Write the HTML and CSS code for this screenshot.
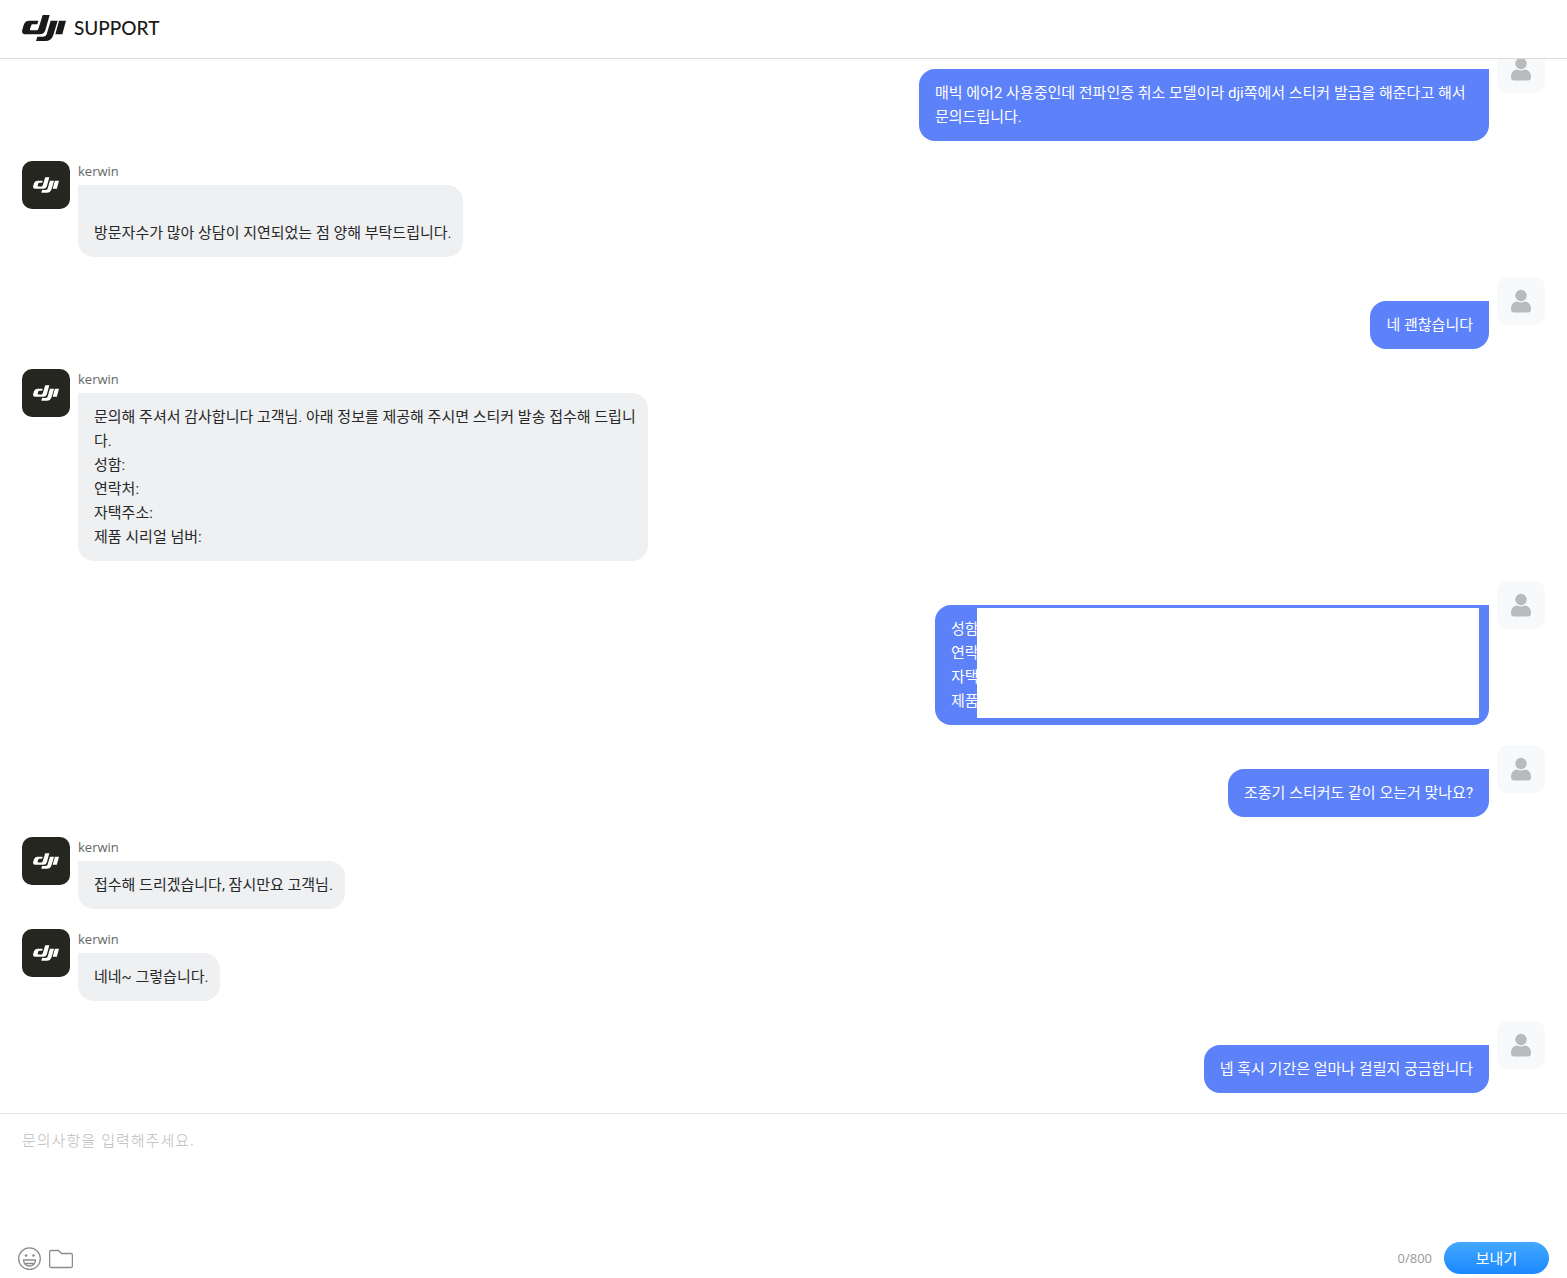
FILE: index.html
```html
<!DOCTYPE html>
<html lang="ko">
<head>
<meta charset="utf-8">
<meta name="viewport" content="width=device-width, initial-scale=1">
<title>DJI Support</title>
<link rel="stylesheet" href="styles.css">
</head>
<body>
<svg class="sprite" aria-hidden="true">
  <symbol id="dji" viewBox="0 0 132 78">
    <path d="M62 0H83L70 46Q66 58 54 58H11Q-3 58 1 44L5 30Q9 17 22 17H49L46 28H33Q28 28 27 32L24 42Q23 46 27 46H44Q48 46 49 42ZM86 17H107L94 60Q88 78 70 78H42L46 65H62Q72 65 74 58ZM111 17H132L121 58H100Z"/>
  </symbol>
  <symbol id="person" viewBox="0 0 20 24">
    <circle cx="10" cy="6.500" r="5.700"/>
    <path d="M6 12.500Q10 14.500 14 12.500C18 13 20 16 20 20Q20 23.500 17 23.500H3Q0 23.500 0 20C0 16 2 13 6 12.500Z"/>
  </symbol>
</svg>
<div class="page">
  <header class="header">
    <a class="brand" href="#" aria-label="DJI Support"><svg class="brand-logo"><use href="#dji"/></svg><span>SUPPORT</span></a>
  </header>
  <main class="chat">
    <div class="messages">
      <article class="message mine">
        <div class="avatar"><svg><use href="#person"/></svg></div>
        <div class="body"><p class="bubble">매빅 에어2 사용중인데 전파인증 취소 모델이라 dji쪽에서 스티커 발급을 해준다고 해서 문의드립니다.</p></div>
      </article>
      <article class="message">
        <div class="avatar"><svg><use href="#dji"/></svg></div>
        <div class="body"><span class="name">kerwin</span><p class="bubble"><br>방문자수가 많아 상담이 지연되었는 점 양해 부탁드립니다.</p></div>
      </article>
      <article class="message mine">
        <div class="avatar"><svg><use href="#person"/></svg></div>
        <div class="body"><p class="bubble">네 괜찮습니다</p></div>
      </article>
      <article class="message">
        <div class="avatar"><svg><use href="#dji"/></svg></div>
        <div class="body"><span class="name">kerwin</span><p class="bubble">문의해 주셔서 감사합니다 고객님. 아래 정보를 제공해 주시면 스티커 발송 접수해 드립니다.<br>성함:<br>연락처:<br>자택주소:<br>제품 시리얼 넘버:</p></div>
      </article>
      <article class="message mine">
        <div class="avatar"><svg><use href="#person"/></svg></div>
        <div class="body"><p class="bubble details">성함<br>연락<br>자택<br>제품<span class="cover"></span></p></div>
      </article>
      <article class="message mine">
        <div class="avatar"><svg><use href="#person"/></svg></div>
        <div class="body"><p class="bubble">조종기 스티커도 같이 오는거 맞나요?</p></div>
      </article>
      <article class="message">
        <div class="avatar"><svg><use href="#dji"/></svg></div>
        <div class="body"><span class="name">kerwin</span><p class="bubble">접수해 드리겠습니다, 잠시만요 고객님.</p></div>
      </article>
      <article class="message">
        <div class="avatar"><svg><use href="#dji"/></svg></div>
        <div class="body"><span class="name">kerwin</span><p class="bubble">네네~ 그렇습니다.</p></div>
      </article>
      <article class="message mine">
        <div class="avatar"><svg><use href="#person"/></svg></div>
        <div class="body"><p class="bubble">넵 혹시 기간은 얼마나 걸릴지 궁금합니다</p></div>
      </article>
    </div>
  </main>
  <form class="composer">
    <textarea class="input" aria-label="문의사항" placeholder="문의사항을 입력해주세요." maxlength="800"></textarea>
    <div class="toolbar">
      <button class="tool" type="button" aria-label="이모티콘"><svg viewBox="0 0 24 24"><circle cx="11.500" cy="12.700" r="10.800"/><path d="M5.500 14H17.500Q17 20 11.500 20T5.500 14ZM7.500 17.500H15.500"/><circle class="eye" cx="8" cy="9.500" r="1.300"/><circle class="eye" cx="15.500" cy="9.500" r="1.300"/></svg></button>
      <button class="tool" type="button" aria-label="파일"><svg viewBox="0 0 24 24"><path d="M2 4.500H9.500L12.500 7.500H22Q23.400 7.500 23.400 9V20Q23.400 21.500 22 21.500H2Q.6 21.500 .6 20V6Q.6 4.500 2 4.500Z"/></svg></button>
      <span class="count">0/800</span>
      <button class="send" type="button">보내기</button>
    </div>
  </form>
</div>
</body>
</html>
```
FILE: styles.css
```css
* { box-sizing: border-box; }
body {
  margin: 0;
  background: #fff;
  color: #262829;
  font: 15px/24px Roboto, "Noto Sans CJK KR", sans-serif;
}
.sprite { position: absolute; width: 0; height: 0; }
.page { display: flex; flex-direction: column; height: 100vh; }

.header {
  display: flex;
  flex: none;
  height: 59px;
  padding: 15px 22px 0;
  border-bottom: 1px solid #dcdcdc;
}
.brand {
  display: flex;
  gap: 8px;
  height: 26px;
  color: #1a1a1a;
  font: 500 19px/26px Lato, sans-serif;
  text-decoration: none;
}
.brand-logo { width: 44px; height: 26px; fill: currentColor; }

.chat {
  display: flex;
  flex: 1;
  flex-direction: column-reverse;
  min-height: 0;
  overflow-y: auto;
  scrollbar-width: none;
}
.messages {
  display: flex;
  flex: none;
  flex-direction: column;
  gap: 20px;
  padding: 20px 22px;
}
.message { display: flex; gap: 8px; }
.mine { flex-direction: row-reverse; }
.avatar {
  display: flex;
  flex: none;
  align-items: center;
  justify-content: center;
  width: 48px;
  height: 48px;
  border-radius: 10px;
  background: #25261f;
}
.avatar svg { width: 26px; height: 16px; fill: #fff; }
.mine .avatar { background: #f8f9fb; }
.mine .avatar svg { width: 20px; height: 24px; fill: #b9babc; }
.body { max-width: 570px; }
.mine .body { padding-top: 24px; }
.name {
  display: block;
  height: 24px;
  color: #666;
  font: 13px/20px "Open Sans", sans-serif;
}
.bubble {
  width: fit-content;
  margin: 0;
  padding: 12px 12px 12px 16px;
  border-radius: 0 16px 16px 16px;
  background: #eff0f2;
}
.mine .bubble {
  padding-right: 16px;
  border-radius: 16px 0 16px 16px;
  background: #5c81f8;
  color: #fff;
}
.details { position: relative; min-width: 554px; }
.cover { position: absolute; inset: 3px 10px 7px 42px; background: #fff; }

.composer {
  display: flex;
  flex: none;
  flex-direction: column;
  height: 165px;
  border-top: 1px solid #e5e5e5;
}
.input {
  flex: 1;
  padding: 14px 22px;
  border: 0;
  outline: 0;
  background: none;
  color: #303233;
  font: 15px/24px "Noto Sans CJK KR", sans-serif;
  letter-spacing: 1px;
  resize: none;
}
.input::placeholder { color: #bbb; font-weight: 300; }
.toolbar { display: flex; align-items: center; gap: 7px; padding: 0 18px 4px; }
.tool { width: 24px; height: 24px; padding: 0; border: 0; background: none; }
.tool svg { display: block; width: 24px; height: 24px; fill: none; stroke: #8c8c8c; stroke-width: 1.3; }
.tool .eye { fill: #8c8c8c; stroke: none; }
.count {
  margin-left: auto;
  color: #999;
  font: 13px/24px "Open Sans", sans-serif;
}
.send {
  width: 105px;
  height: 32px;
  margin-left: 5px;
  padding: 0;
  border: 0;
  border-radius: 16px;
  background: linear-gradient(#44a8ff, #1b88ff);
  color: #fff;
  font: 15px/24px "Noto Sans CJK KR", sans-serif;
}
```
